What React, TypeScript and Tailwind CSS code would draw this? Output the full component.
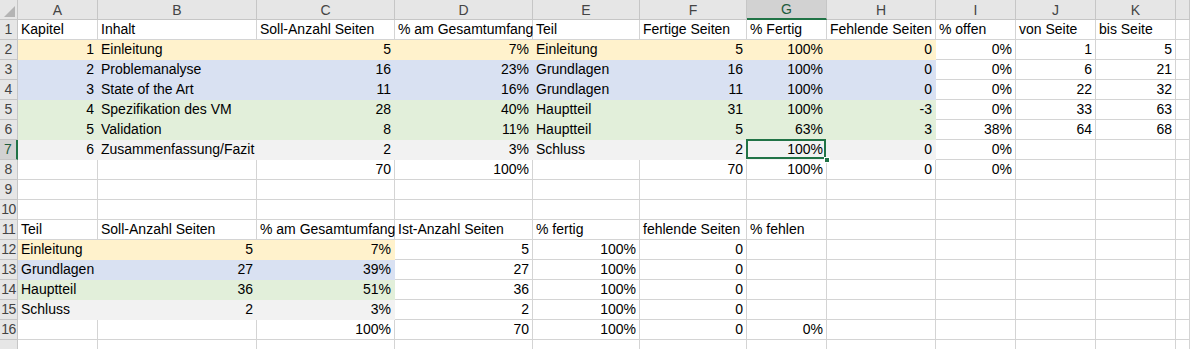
import React from "react";

type Fill = "o" | "b" | "g" | "s" | "";

const fillClass: Record<string, string> = {
  o: "bg-[#fff2cc] border-[#fff2cc]",
  b: "bg-[#d9e1f2] border-[#d9e1f2]",
  g: "bg-[#e2efda] border-[#e2efda]",
  s: "bg-[#f2f2f2] border-[#f2f2f2]",
};

const cols = ["A", "B", "C", "D", "E", "F", "G", "H", "I", "J", "K", ""];

const rows: { cells: string[]; fill: Fill; fillCols: number }[] = [
  { cells: ["Kapitel", "Inhalt", "Soll-Anzahl Seiten", "% am Gesamtumfang", "Teil", "Fertige Seiten", "% Fertig", "Fehlende Seiten", "% offen", "von Seite", "bis Seite", ""], fill: "", fillCols: 0 },
  { cells: ["1", "Einleitung", "5", "7%", "Einleitung", "5", "100%", "0", "0%", "1", "5", ""], fill: "o", fillCols: 8 },
  { cells: ["2", "Problemanalyse", "16", "23%", "Grundlagen", "16", "100%", "0", "0%", "6", "21", ""], fill: "b", fillCols: 8 },
  { cells: ["3", "State of the Art", "11", "16%", "Grundlagen", "11", "100%", "0", "0%", "22", "32", ""], fill: "b", fillCols: 8 },
  { cells: ["4", "Spezifikation des VM", "28", "40%", "Hauptteil", "31", "100%", "-3", "0%", "33", "63", ""], fill: "g", fillCols: 8 },
  { cells: ["5", "Validation", "8", "11%", "Hauptteil", "5", "63%", "3", "38%", "64", "68", ""], fill: "g", fillCols: 8 },
  { cells: ["6", "Zusammenfassung/Fazit", "2", "3%", "Schluss", "2", "100%", "0", "0%", "", "", ""], fill: "s", fillCols: 8 },
  { cells: ["", "", "70", "100%", "", "70", "100%", "0", "0%", "", "", ""], fill: "", fillCols: 0 },
  { cells: ["", "", "", "", "", "", "", "", "", "", "", ""], fill: "", fillCols: 0 },
  { cells: ["", "", "", "", "", "", "", "", "", "", "", ""], fill: "", fillCols: 0 },
  { cells: ["Teil", "Soll-Anzahl Seiten", "% am Gesamtumfang", "Ist-Anzahl Seiten", "% fertig", "fehlende Seiten", "% fehlen", "", "", "", "", ""], fill: "", fillCols: 0 },
  { cells: ["Einleitung", "5", "7%", "5", "100%", "0", "", "", "", "", "", ""], fill: "o", fillCols: 3 },
  { cells: ["Grundlagen", "27", "39%", "27", "100%", "0", "", "", "", "", "", ""], fill: "b", fillCols: 3 },
  { cells: ["Hauptteil", "36", "51%", "36", "100%", "0", "", "", "", "", "", ""], fill: "g", fillCols: 3 },
  { cells: ["Schluss", "2", "3%", "2", "100%", "0", "", "", "", "", "", ""], fill: "s", fillCols: 3 },
  { cells: ["", "", "100%", "70", "100%", "0", "0%", "", "", "", "", ""], fill: "", fillCols: 0 },
];

const isNum = (s: string) => /^-?\d+%?$/.test(s);

export default function App() {
  return (
    <div className="w-[1190px] h-[349px] overflow-hidden bg-white font-['Liberation_Sans',Arial,sans-serif] text-[14px] text-black leading-none">
      <div className="grid grid-cols-[18px_80px_159px_138px_138px_107px_107px_80px_109px_80px_80px_80px_1fr] auto-rows-[20px]">
        <div className="relative bg-[#e6e6e6] border-r border-b border-[#c6c6c6]">
          <div className="absolute right-[2px] bottom-[2px] w-0 h-0 border-l-[11px] border-l-transparent border-b-[11px] border-b-[#b4b4b4]" />
        </div>
        {cols.map((c, i) =>
          i === 6 ? (
            <div key={i} className="bg-[#d2d2d2] border-r border-[#c6c6c6] border-b-2 border-b-[#217346] flex items-center justify-center text-[#1f5c3d]">
              {c}
            </div>
          ) : (
            <div key={i} className="bg-[#e6e6e6] border-r border-b border-[#c6c6c6] flex items-center justify-center text-[#444]">
              {c}
            </div>
          )
        )}
        {rows.map((r, ri) => (
          <React.Fragment key={ri}>
            <div
              className={
                ri === 6
                  ? "bg-[#d2d2d2] border-b border-[#c6c6c6] border-r-2 border-r-[#217346] flex items-end justify-center pb-[3px] text-[#1f5c3d]"
                  : "bg-[#e6e6e6] border-r border-b border-[#c6c6c6] flex items-end justify-center pb-[3px] text-[#444]"
              }
            >
              <span className={ri >= 9 ? "tracking-[-0.6px]" : ""}>{ri + 1}</span>
            </div>
            {r.cells.map((t, ci) => {
              const filled = r.fill && ci < r.fillCols;
              const num = isNum(t);
              const selected = ri === 6 && ci === 6;
              return (
                <div
                  key={ci}
                  className={
                    "relative border-r border-b flex items-end pb-[3px] whitespace-nowrap " +
                    (filled ? fillClass[r.fill] : "border-[#d4d4d4]") +
                    (num ? " justify-end pr-[3px]" : " justify-start pl-[3px]")
                  }
                >
                  <span className={num ? "" : "relative z-10"}>{t}</span>
                  {selected && (
                    <>
                      <div className="absolute -left-[1px] -top-[1px] right-0 bottom-0 border-2 border-[#217346] pointer-events-none" />
                      <div className="absolute -right-[4px] -bottom-[4px] w-[6px] h-[6px] bg-[#217346] border border-white z-20" />
                    </>
                  )}
                </div>
              );
            })}
          </React.Fragment>
        ))}
        <div className="bg-[#e6e6e6] border-r border-[#c6c6c6] h-[9px]" />
        {cols.map((_, i) => (
          <div key={i} className="border-r border-[#d4d4d4] h-[9px]" />
        ))}
      </div>
    </div>
  );
}
